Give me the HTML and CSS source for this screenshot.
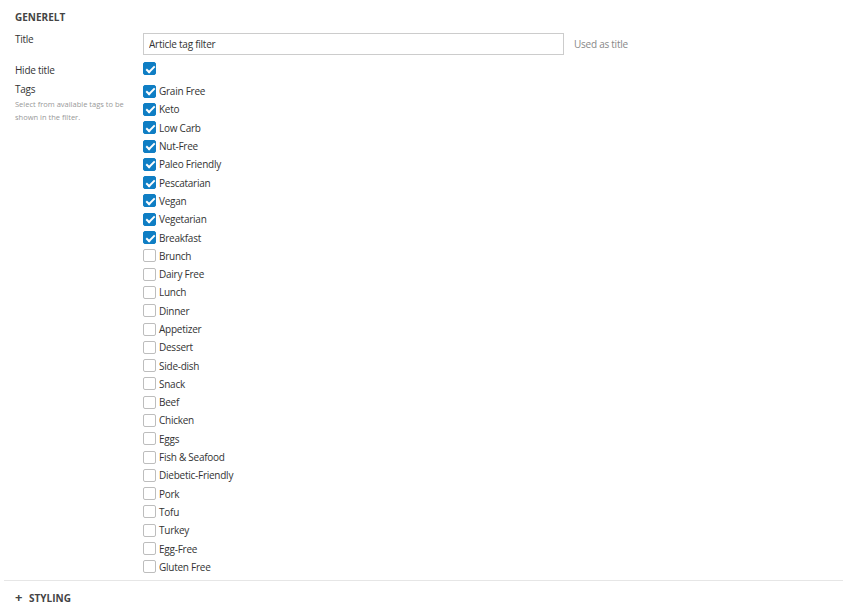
FILE: index.html
```html
<!DOCTYPE html>
<html>
<head>
  <meta charset="UTF-8">
  <title>Article tag filter</title>
  <link rel="stylesheet" href="styles.css">
</head>
<body>
  <div class="section">
    <h2 class="section-title">GENERELT</h2>

    <div class="row row-title">
      <div class="label">Title</div>
      <div class="control">
        <input class="text-input" type="text" value="Article tag filter">
        <span class="hint">Used as title</span>
      </div>
    </div>

    <div class="row row-hide">
      <div class="label">Hide title</div>
      <div class="control">
        <span class="check checked"></span>
      </div>
    </div>

    <div class="row row-tags">
      <div class="label">
        Tags
        <div class="description">Select from available tags to be shown in the filter.</div>
      </div>
      <div class="control">
        <ul class="tag-list" id="tagList"></ul>
      </div>
    </div>
  </div>

  <div class="collapsed">
    <span class="plus">+</span> STYLING
  </div>

  <script>
    // Tags, checked ones first
    const tags = [
      ['Grain Free', true], ['Keto', true], ['Low Carb', true], ['Nut-Free', true],
      ['Paleo Friendly', true], ['Pescatarian', true], ['Vegan', true], ['Vegetarian', true],
      ['Breakfast', true], ['Brunch'], ['Dairy Free'], ['Lunch'], ['Dinner'], ['Appetizer'],
      ['Dessert'], ['Side-dish'], ['Snack'], ['Beef'], ['Chicken'], ['Eggs'],
      ['Fish & Seafood'], ['Diebetic-Friendly'], ['Pork'], ['Tofu'], ['Turkey'],
      ['Egg-Free'], ['Gluten Free']
    ];

    const tagList = document.getElementById('tagList');
    tags.forEach(([name, checked]) => {
      const li = document.createElement('li');
      const box = document.createElement('span');
      box.className = checked ? 'check checked' : 'check';
      const text = document.createElement('span');
      text.textContent = name;
      li.appendChild(box);
      li.appendChild(text);
      tagList.appendChild(li);
    });
  </script>
</body>
</html>
```

FILE: styles.css
```css
body {
  margin: 0;
  font-family: 'Open Sans', sans-serif;
  font-size: 10px;
  letter-spacing: -0.25px;
  color: #333;
  background: #fff;
}
.section {
  padding: 10px 15px 4px 15px;
  margin: 0 4px;
  border-bottom: 1px solid #e6e6e6;
}
.section-title {
  margin: 0 0 6px -4px;
  font-size: 10px;
  font-weight: 700;
  letter-spacing: 0;
  color: #444;
}
.row {
  display: grid;
  grid-template-columns: 128px 1fr;
  margin-left: -4px;
}
.label {
  line-height: 14px;
}
.row-title {
  margin-bottom: 7px;
}
.row-title .label {
  padding-top: 2px;
}
.row-title .control {
  display: flex;
  align-items: center;
  gap: 10px;
  padding-top: 3px;
}
.text-input {
  width: 421px;
  height: 22px;
  box-sizing: border-box;
  border: 1px solid #ccc;
  padding: 0 5px;
  font-family: 'Open Sans', sans-serif;
  font-size: 10px;
  letter-spacing: -0.25px;
  color: #333;
  outline: none;
}
.hint {
  color: #888;
}
.row-hide {
  margin-bottom: 4px;
  align-items: center;
}
.description {
  margin-top: 2px;
  font-size: 7.5px;
  letter-spacing: 0;
  line-height: 13px;
  color: #999;
  width: 115px;
}
.tag-list {
  list-style: none;
  margin: 0;
  padding: 0;
}
.tag-list li {
  display: flex;
  align-items: center;
  gap: 3px;
  height: 18.3px;
}
.check {
  display: inline-block;
  width: 13px;
  height: 13px;
  box-sizing: border-box;
  border: 1px solid #bdbdbd;
  border-radius: 2px;
  background: #fff;
  position: relative;
  flex: none;
}
.check.checked {
  background: #0f7ec4;
  border-color: #0f7ec4;
}
.check.checked::after {
  content: '';
  position: absolute;
  left: 3.5px;
  top: 0.5px;
  width: 3px;
  height: 7px;
  border: solid #fff;
  border-width: 0 2px 2px 0;
  transform: rotate(45deg);
}
.collapsed {
  padding: 7px 15px;
  font-weight: 700;
  font-size: 10px;
  letter-spacing: 0;
  color: #444;
}
.plus {
  font-size: 13px;
  margin-right: 4px;
}
```
